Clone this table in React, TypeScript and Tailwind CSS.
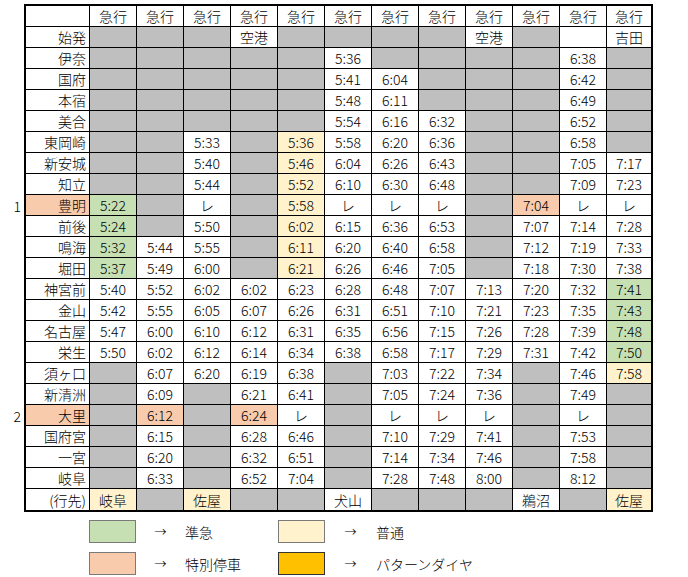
type Tone = 'gray' | 'white' | 'green' | 'yellow' | 'salmon';

interface Row {
  label: string;
  labelTone?: Tone;
  mark?: string;
  cells: string;
}

// token format: "-" gray cell, "_" blank white cell, g/y/s prefix = green/yellow/salmon fill
const ROWS: Row[] = [
  { label: '始発', cells: '- - - 空港 - - - - 空港 - _ 吉田' },
  { label: '伊奈', cells: '- - - - - 5:36 - - - - 6:38 -' },
  { label: '国府', cells: '- - - - - 5:41 6:04 - - - 6:42 -' },
  { label: '本宿', cells: '- - - - - 5:48 6:11 - - - 6:49 -' },
  { label: '美合', cells: '- - - - - 5:54 6:16 6:32 - - 6:52 -' },
  { label: '東岡崎', cells: '- - 5:33 - y5:36 5:58 6:20 6:36 - - 6:58 -' },
  { label: '新安城', cells: '- - 5:40 - y5:46 6:04 6:26 6:43 - - 7:05 7:17' },
  { label: '知立', cells: '- - 5:44 - y5:52 6:10 6:30 6:48 - - 7:09 7:23' },
  { label: '豊明', labelTone: 'salmon', mark: '1', cells: 'g5:22 - レ - y5:58 レ レ レ - s7:04 レ レ' },
  { label: '前後', cells: 'g5:24 - 5:50 - y6:02 6:15 6:36 6:53 - 7:07 7:14 7:28' },
  { label: '鳴海', cells: 'g5:32 5:44 5:55 - y6:11 6:20 6:40 6:58 - 7:12 7:19 7:33' },
  { label: '堀田', cells: 'g5:37 5:49 6:00 - y6:21 6:26 6:46 7:05 - 7:18 7:30 7:38' },
  { label: '神宮前', cells: '5:40 5:52 6:02 6:02 6:23 6:28 6:48 7:07 7:13 7:20 7:32 g7:41' },
  { label: '金山', cells: '5:42 5:55 6:05 6:07 6:26 6:31 6:51 7:10 7:21 7:23 7:35 g7:43' },
  { label: '名古屋', cells: '5:47 6:00 6:10 6:12 6:31 6:35 6:56 7:15 7:26 7:28 7:39 g7:48' },
  { label: '栄生', cells: '5:50 6:02 6:12 6:14 6:34 6:38 6:58 7:17 7:29 7:31 7:42 g7:50' },
  { label: '須ヶ口', cells: '- 6:07 6:20 6:19 6:38 - 7:03 7:22 7:34 - 7:46 y7:58' },
  { label: '新清洲', cells: '- 6:09 - 6:21 6:41 - 7:05 7:24 7:36 - 7:49 -' },
  { label: '大里', labelTone: 'salmon', mark: '2', cells: '- s6:12 - s6:24 レ - レ レ レ - レ -' },
  { label: '国府宮', cells: '- 6:15 - 6:28 6:46 - 7:10 7:29 7:41 - 7:53 -' },
  { label: '一宮', cells: '- 6:20 - 6:32 6:51 - 7:14 7:34 7:46 - 7:58 -' },
  { label: '岐阜', cells: '- 6:33 - 6:52 7:04 - 7:28 7:48 8:00 - 8:12 -' },
  { label: '(行先)', cells: 'y岐阜 - y佐屋 - - 犬山 - - - 鵜沼 - y佐屋' },
];

const toneBg: Record<Tone, string> = {
  gray: 'bg-[#bfbfbf]',
  white: 'bg-white',
  green: 'bg-[#c6e0b4]',
  yellow: 'bg-[#fff2cc]',
  salmon: 'bg-[#f8cbad]',
};

const prefixTone: Record<string, Tone> = { g: 'green', y: 'yellow', s: 'salmon' };

function parse(token: string): { tone: Tone; text: string } {
  if (token === '-') return { tone: 'gray', text: '' };
  if (token === '_') return { tone: 'white', text: '' };
  const t = prefixTone[token[0]];
  if (t) return { tone: t, text: token.slice(1) };
  return { tone: 'white', text: token };
}

const TOTAL_ROWS = ROWS.length + 1;

function Cell({
  col,
  row,
  tone,
  align = 'center',
  children,
}: {
  col: number;
  row: number;
  tone: Tone;
  align?: 'center' | 'right';
  children?: React.ReactNode;
}) {
  const lastCol = col === 12;
  const lastRow = row === TOTAL_ROWS - 1;
  return (
    <div
      className={`h-[21px] flex items-center border-black ${toneBg[tone]} ${lastCol ? '' : 'border-r'} ${
        lastRow ? 'h-[20px]' : 'border-b'
      } ${align === 'right' ? 'justify-end pr-[3px]' : 'justify-center'}`}
    >
      {children}
    </div>
  );
}

export default function App() {
  return (
    <div className="min-h-screen bg-white pt-[4px] text-[14px] leading-[20px] font-light text-black font-['Noto_Sans_CJK_JP',sans-serif]">
      <div className="flex">
        {/* row marks outside the table */}
        <div className="w-[24px] pt-[2px] flex flex-col">
          <div className="h-[21px]" />
          {ROWS.map((r, i) => (
            <div key={i} className="h-[21px] flex items-center justify-end pr-[3px]">
              {r.mark}
            </div>
          ))}
        </div>

        <div className="w-[629px] border-2 border-black">
          <div className="grid grid-cols-[64px_repeat(11,47px)_1fr]">
            {/* header */}
            <Cell col={0} row={0} tone="white" />
            {Array.from({ length: 12 }).map((_, c) => (
              <Cell key={c} col={c + 1} row={0} tone="white">
                急行
              </Cell>
            ))}

            {ROWS.map((r, i) => {
              const tokens = r.cells.split(' ');
              return [
                <Cell key={`l${i}`} col={0} row={i + 1} tone={r.labelTone ?? 'white'} align="right">
                  {r.label}
                </Cell>,
                ...tokens.map((tok, c) => {
                  const { tone, text } = parse(tok);
                  return (
                    <Cell key={`${i}-${c}`} col={c + 1} row={i + 1} tone={tone}>
                      {text}
                    </Cell>
                  );
                }),
              ];
            })}
          </div>
        </div>
      </div>

      {/* Legend */}
      <div className="ml-[89px] mt-[8px] grid grid-cols-[47px_49px_93px_47px_51px_auto] gap-y-[9px] items-center">
        <div className="h-[23px] border border-[#7a7a7a] bg-[#c6e0b4]" />
        <div className="text-center text-[12px]">→</div>
        <div>準急</div>
        <div className="h-[23px] border border-[#7a7a7a] bg-[#fff2cc]" />
        <div className="text-center text-[12px]">→</div>
        <div>普通</div>

        <div className="h-[23px] border border-[#7a7a7a] bg-[#f8cbad]" />
        <div className="text-center text-[12px]">→</div>
        <div>特別停車</div>
        <div className="h-[23px] border border-[#333] bg-[#ffc000]" />
        <div className="text-center text-[12px]">→</div>
        <div>パターンダイヤ</div>
      </div>
    </div>
  );
}
